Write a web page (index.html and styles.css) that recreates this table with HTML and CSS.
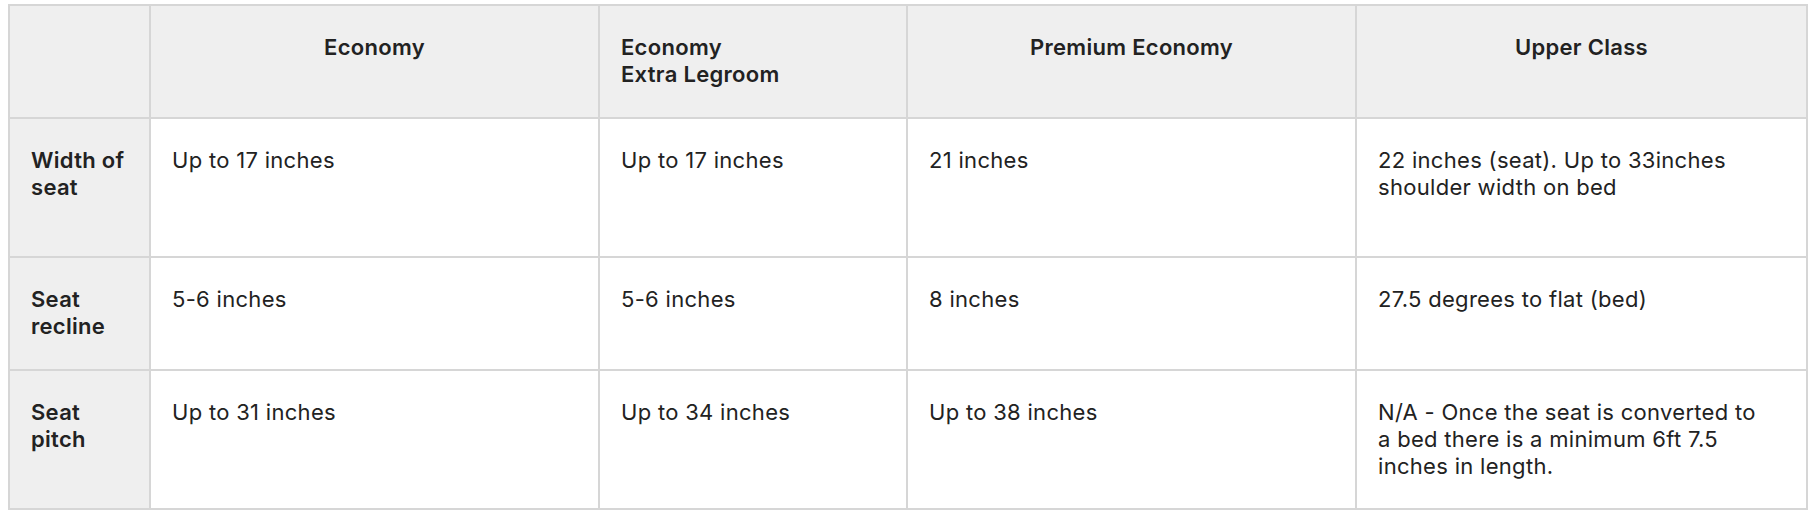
FILE: index.html
```html
<!DOCTYPE html>
<html lang="en">
<head>
<meta charset="utf-8">
<title>Seat comparison</title>
<link rel="stylesheet" href="styles.css">
</head>
<body>
<div class="wrap">
  <table class="seats">
    <colgroup>
      <col class="c-label">
      <col class="c-eco">
      <col class="c-eel">
      <col class="c-prem">
      <col class="c-upper">
    </colgroup>
    <thead>
      <tr class="r-head">
        <th class="corner"></th>
        <th class="center">Economy</th>
        <th class="left">Economy<br>Extra Legroom</th>
        <th class="center">Premium Economy</th>
        <th class="center">Upper Class</th>
      </tr>
    </thead>
    <tbody>
      <tr class="r-tall">
        <th class="label">Width of seat</th>
        <td>Up to 17 inches</td>
        <td>Up to 17 inches</td>
        <td>21 inches</td>
        <td class="upper">22 inches (seat). Up to 33inches shoulder width on bed</td>
      </tr>
      <tr class="r-short">
        <th class="label">Seat recline</th>
        <td>5-6 inches</td>
        <td>5-6 inches</td>
        <td>8 inches</td>
        <td class="upper">27.5 degrees to flat (bed)</td>
      </tr>
      <tr class="r-tall">
        <th class="label">Seat pitch</th>
        <td>Up to 31 inches</td>
        <td>Up to 34 inches</td>
        <td>Up to 38 inches</td>
        <td class="upper">N/A - Once the seat is converted to a bed there is a minimum 6ft 7.5 inches in length.</td>
      </tr>
    </tbody>
  </table>
</div>
</body>
</html>
```

FILE: styles.css
```css
html, body {
  margin: 0;
  padding: 0;
  background: #ffffff;
}

.wrap {
  padding: 4px 8px;
}

.seats {
  width: 100%;
  border-collapse: collapse;
  table-layout: fixed;
  font-family: Inter, "Open Sans", "Liberation Sans", sans-serif;
  font-size: 22px;
  line-height: 27px;
  letter-spacing: 0.3px;
  color: #222222;
}

.c-label { width: 141px; }
.c-eco { width: 449px; }
.c-eel { width: 308px; }
.c-prem { width: 449px; }
.c-upper { width: 451px; }

.seats th,
.seats td {
  border: 2px solid #d6d6d6;
  padding: 28px 21px 24px;
  vertical-align: top;
  text-align: left;
}

.seats thead th {
  background: #efefef;
  font-weight: 600;
}

.seats thead th.center {
  text-align: center;
}

.seats th.label {
  background: #efefef;
  font-weight: 600;
  padding-right: 12px;
}

.seats td {
  font-weight: 400;
}

.seats td.upper {
  padding-right: 44px;
}

.r-head { height: 113px; }
.r-tall { height: 139px; }
.r-short { height: 113px; }
```
